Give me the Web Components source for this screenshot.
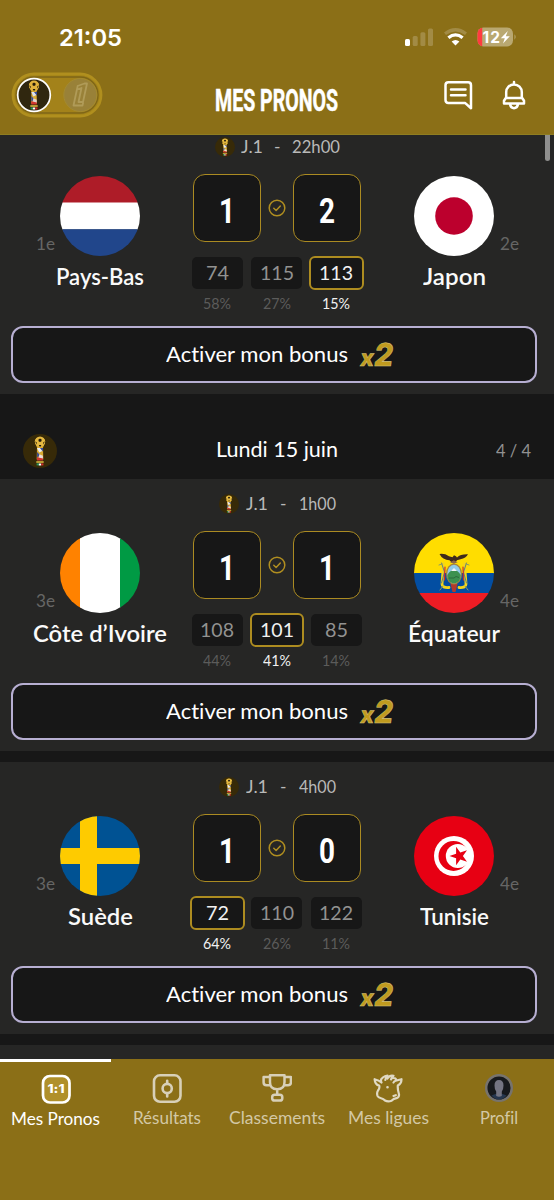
<!DOCTYPE html>
<html lang="fr">
<head>
<meta charset="utf-8">
<title>Mes Pronos</title>
<style>
html,body{margin:0;height:100%;background:#171717}
body{font-family:Lato,"Open Sans",sans-serif;color:#fff;overflow:hidden;font-variant-ligatures:none}
</style>
</head>
<body>
<pronos-app></pronos-app>
<script>
const define=(name,html,after)=>customElements.define(name,class extends HTMLElement{
  connectedCallback(){
    if(this.shadowRoot)return;
    this.attachShadow({mode:'open'}).innerHTML=typeof html==='function'?html(this):html;
    if(after)after(this);
  }
});
const a=(el,n,d='')=>el.getAttribute(n)??d;

define('pronos-app',`
<style>
:host{display:flex;flex-direction:column;width:554px;height:1200px;overflow:hidden;background:#171717}
main{flex:1;min-height:0;overflow:hidden;position:relative}
.list{display:flex;flex-direction:column;margin-top:-13px}
.gap{height:11px}
.thumb{position:absolute;right:4px;top:-8px;width:5px;height:34px;border-radius:3px;background:#8f8f8e}
</style>
<app-header></app-header>
<main>
 <div class="list">
  <match-card time="22h00" tw="48" cup="6" gapw="11.3" home="Pays-Bas" hw="88" hr="1e" hf="nl" away="Japon" aw="63" ar="2e" af="jp" score="1,2" odds="74,115,113" pct="58,27,15" sel="2"></match-card>
  <day-header></day-header>
  <match-card time="1h00" tw="37" cup="7" gapw="12.5" home="Côte d’Ivoire" hw="134" hr="3e" hf="ci" away="Équateur" aw="92" ar="4e" af="ec" score="1,1" odds="108,101,85" pct="44,41,14" sel="1"></match-card>
  <div class="gap"></div>
  <match-card time="4h00" tw="37" cup="7" gapw="12.5" home="Suède" hw="65" hr="3e" hf="se" away="Tunisie" aw="69" ar="4e" af="tn" score="1,0" odds="72,110,122" pct="64,26,11" sel="0"></match-card>
  <div class="gap"></div>
  <match-card time="" empty></match-card>
 </div>
 <div class="thumb"></div>
</main>
<tab-bar></tab-bar>`);

define('app-header',`
<style>
:host{display:block;height:135px;box-sizing:border-box;background:#8b6f17;border-bottom:1px solid #8f7d20}
.status{display:flex;align-items:center;height:74px;padding:0 37px 0 59px;box-sizing:border-box}
.clock{font:600 23.5px/30px Inter,sans-serif;padding-top:1px}
.clock fit-text{display:block}
.status svg{margin-left:auto;display:block}
.bar{display:grid;grid-template-columns:215px 123px 1fr;height:60px}
.pill{display:block;margin:-2px 0 0 11px}
.title{font:700 30.5px/34px Roboto,sans-serif;padding-top:10px;-webkit-text-stroke:.5px #fff}
.act{display:flex;justify-content:flex-end;gap:28px;padding-right:28px;padding-top:6px}
svg text{font-family:Inter,sans-serif;font-weight:700}
</style>
<div class="status"><div class="clock"><fit-text w="63">21:05</fit-text></div>
<svg width="114" height="22" viewBox="0 0 114 22">
 <rect x="2" y="13" width="5" height="7" rx="1.5" fill="#fff"/>
 <g fill="#a28b45"><rect x="9.7" y="10" width="5" height="10" rx="1.5"/><rect x="17.4" y="6.3" width="5" height="13.7" rx="1.5"/><rect x="25" y="2.5" width="5" height="17.5" rx="1.5"/></g>
 <g transform="translate(1 0)"><path d="M41 7.8Q51.5-.3 62 7.8" fill="none" stroke="#a28b45" stroke-width="3.2"/>
 <path d="M44.4 11.8Q51.5 6 58.6 11.8" fill="none" stroke="#fff" stroke-width="3.3"/>
 <path d="M47.6 15.6Q51.5 12.3 55.4 15.6L51.5 19.6Z" fill="#fff"/></g>
 <clipPath id="b"><rect x="74.5" y="1.5" width="35.5" height="19" rx="6"/></clipPath>
 <g clip-path="url(#b)"><rect x="74" y="1" width="37" height="20" fill="#b9a871"/><rect x="74" y="1" width="5.2" height="20" fill="#ff3b3f"/></g>
 <path d="M111.5 8.3q2.2 2.7 0 5.4z" fill="#b9a871"/>
 <text x="79.5" y="16.7" font-size="15.5" fill="#fff" textLength="17.5">12</text>
 <path d="M104.8 5 97.8 12.2h4l-1.8 5.3 6.8-7.2h-4z" fill="#fff"/>
</svg></div>
<div class="bar">
<svg class="pill" width="92" height="46" viewBox="0 0 92 46">
 <rect x="1.9" y="1.9" width="88.2" height="42.2" rx="21.1" fill="#a48419" stroke="#b08f1e" stroke-width="2.6"/>
 <rect x="5" y="5" width="82" height="36" rx="18" fill="#a3821a" stroke="#7f6618" stroke-width="1.4"/>
 <circle cx="69.3" cy="23" r="16.5" fill="#998138" stroke="#a38a31"/>
 <path d="M66.8 13.5 62.5 33.5H71.500L72.200 30.500M66.500 14 73.500 11.500H76L72 30H67.500L70.500 16 66 17.500" fill="none" stroke="#b09b58" stroke-width="1.8" stroke-linejoin="round"/>
 <circle cx="23" cy="23" r="16.3" fill="#30270f" stroke="#fff" stroke-width="1.7"/>
 <g transform="translate(6 6)">
  <path d="M14.4 13.5 12 9Q11 4 17 3q6 1 5 6l-2.4 4.5.3 12h-5.8z" fill="#d8aa32"/>
  <circle cx="17" cy="7.6" r="5" fill="#dfb13c"/><path d="M15.3 5.7 17 4.6l1.8 1.1-.7 2h-2.2zM12.2 7.2l1.6 1.4-.3 2zM21.8 7.2l-1.6 1.4.3 2zM15.8 11h2.5l-.5 1.4h-1.4z" fill="#21190b"/>
  <path d="M14.3 14h3l2 3-3 1.5z" fill="#dce2ed"/><path d="M17 14h3v3.5z" fill="#304aa2"/><path d="m14.2 18 3 3-2.8 3z" fill="#384c92"/><path d="m16.3 20.2 3.4 1.5v3.5h-4z" fill="#e2d4cf"/><path d="M14.3 23.3l5.5 1.2v2h-5.6z" fill="#d3362e"/>
  <path d="M13.3 27h7.4v2h-7.4z" fill="#b69a32"/><path d="M13.6 29.4h2.2v2h-2.2z" fill="#209458"/><path d="M15.8 29.4h2.4v2h-2.4z" fill="#fff"/><path d="M18.2 29.4h2.2v2h-2.2z" fill="#d62a29"/></g>
</svg>
<div class="title"><fit-text w="123">MES PRONOS</fit-text></div>
<div class="act">
<svg width="30" height="30" viewBox="0 0 30 30" fill="none" stroke="#fff" stroke-width="2.5" stroke-linejoin="round" stroke-linecap="round"><path d="M27 28.2V5.2Q27 2.3 24.1 2.3H4.4Q1.5 2.3 1.5 5.2V20Q1.5 22.9 4.4 22.9H21ZM7 9.4H21.5M7 15.3H21.5"/></svg>
<svg width="24" height="30" viewBox="0 0 24 30" fill="none" stroke="#fff" stroke-width="2.5" stroke-linejoin="round" stroke-linecap="round"><path d="M12 2V4M4.2 18V12.2a7.8 7.8 0 0 1 15.6 0V18M3.8 18H20.2L22 20.8V23.6H2V20.8ZM8 24.3Q8.8 28.2 12 28.2T16 24.3"/></svg>
</div></div>`);

define('cup-icon',el=>`
<style>:host{display:block}svg{display:block}</style>
<svg width="${a(el,'size')}" height="${a(el,'size')}" viewBox="0 0 34 34"><circle cx="17" cy="17" r="17" fill="#372a08"/>
<path d="M14 13.5 12 9Q11 4 17 3q6 1 5 6l-2 4.5.3 12h-6.6z" fill="#d8aa32"/>
<circle cx="17" cy="7.6" r="5.2" fill="#e5b941"/><path d="M15.3 5.7 17 4.6l1.8 1.1-.7 2h-2.2zM12.2 7.2l1.6 1.4-.3 2zM21.8 7.2l-1.6 1.4.3 2zM15.8 11h2.5l-.5 1.4h-1.4z" fill="#21190b"/>
<path d="M14 14h3.3l2 3-3 1.5z" fill="#e9edf5"/><path d="M17 14h3v3.5z" fill="#304aa2"/><path d="m14 18 3 3-2.8 3z" fill="#384c92"/><path d="m16.3 20.2 3.6 1.5v3.5h-4.4z" fill="#ecded8"/><path d="M14 23.3l6 1.2v2h-6z" fill="#d3362e"/>
<path d="M13.3 27h7.4v2h-7.4z" fill="#b69a32"/><path d="M13.6 29.4h2.2v2h-2.2z" fill="#209458"/><path d="M15.8 29.4h2.4v2h-2.4z" fill="#fff"/><path d="M18.2 29.4h2.2v2h-2.2z" fill="#d62a29"/></svg>`);

define('day-header',`
<style>
:host{display:grid;grid-template-columns:1fr auto 1fr;height:85px;box-sizing:border-box;padding:40px 23px 0;background:#171717}
.d{font-size:21px;line-height:30px}
.n{justify-self:end;font-size:17.5px;line-height:33px;color:#919191}
</style>
<cup-icon size="34"></cup-icon><div class="d"><fit-text w="122">Lundi 15 juin</fit-text></div><div class="n"><fit-text w="35">4 / 4</fit-text></div>`);

const flags={
nl:'<path fill="#ae1c28" d="M0 0h80v27H0z"/><path fill="#fff" d="M0 26.5h80v27H0z"/><path fill="#21468b" d="M0 53.3h80V80H0z"/>',
jp:'<path fill="#fff" d="M0 0h80v80H0z"/><circle cx="40" cy="40" r="18.8" fill="#bc002d"/>',
ci:'<path fill="#ff8200" d="M0 0h21v80H0z"/><path fill="#fff" d="M20 0h41v80H20z"/><path fill="#009a44" d="M60 0h20v80H60z"/>',
se:'<path fill="#005293" d="M0 0h80v80H0z"/><path fill="#fecb00" d="M20 0h17v80H20zM0 32h80v16H0z"/>',
tn:'<path fill="#e70013" d="M0 0h80v80H0z"/><circle cx="40" cy="40" r="20" fill="#fff"/><circle cx="39.5" cy="40" r="15" fill="#e70013"/><circle cx="43.8" cy="40" r="12" fill="#fff"/><path d="m35.5 40 6.6-2.2v-7l4.2 5.6 6.7-2.1-4.1 5.7 4.1 5.7-6.7-2.1-4.2 5.6v-7z" fill="#e70013"/>',
ec:`<path fill="#ffdd00" d="M0 0h80v41H0z"/><path fill="#034ea2" d="M0 40h80v21H0z"/><path fill="#ed1c24" d="M0 60h80v20H0z"/>
<g fill="none" stroke-linecap="round"><path d="M29.5 30.5 28 51q0 4 7 3.5" stroke="#f4d51b" stroke-width="2.8"/><path d="M50.5 30.5 52 51q0 4-7 3.5" stroke="#f4d51b" stroke-width="2.8"/><path d="M27.5 30l3 9-3 11M52.5 30l-3 9 3 11" stroke="#35679f" stroke-width=".8"/><path d="M31 34 30.5 47M49 34 49.5 47" stroke="#cf2c2d" stroke-width="1.2"/><path d="m25 32 3-1m27 1-3-1M29 53l-3 4m25-4 3 4" stroke="#8a9a68" stroke-width="1"/></g>
<path d="M36.5 51h7l-2 8h-3z" fill="#b33a2b"/><ellipse cx="40" cy="41" rx="8" ry="10.5" fill="#a5833c"/><ellipse cx="40" cy="41" rx="6.8" ry="9.2" fill="#91cbe8"/><path d="M33.3 42q3-5 6.7-5t6.7 5l-.4 3.5q-2 4.7-6.3 4.7t-6.3-4.7z" fill="#3c9150"/><path d="M37 38l3-3 3 3z" fill="#f3f6f8"/><path d="M35 45h5l2-1.5 3 1" stroke="#2a6b3c" fill="none"/>
<path d="M25.5 21q5-.8 9.500 2.200l3.500 1 1.500-2 2 1 1 1.200q3.500-3.500 11-3.200-2 4-7.500 5l-3.500 1-2 2.500h-3l-2.500-2.500q-7-.2-10-6.200z" fill="#3f2a1c"/><path d="M36 29.3l3.8-2 3.8 2-3.8 1.5z" fill="#8d6747"/>`};

define('round-flag',el=>`
<style>:host{display:block;width:80px;height:80px;border-radius:50%;overflow:hidden}svg{display:block}</style>
<svg width="80" height="80" viewBox="0 0 80 80">${flags[a(el,'code')]}</svg>`);

define('team-block',el=>{
 const home=el.hasAttribute('home');
 const rank=`<div class="r ${home?'l':'g'}"><fit-text w="19">${a(el,'rank')}</fit-text></div>`;
 return `
<style>
:host{display:block;padding:2px 7px 0 0}
:host([home]){padding:2px 0 0 7px}
.f{display:grid;grid-template-columns:1fr 80px 1fr;column-gap:5.5px;align-items:end}
.r{font-size:16.5px;line-height:20px;color:#666665;padding-bottom:2px}
.l{text-align:right}
.n{margin-top:6px;text-align:center;font-size:23px;line-height:28px;font-weight:600;color:#fafafa}
</style>
<div class="f">${home?rank:'<span></span>'}<round-flag code="${a(el,'flag')}"></round-flag>${home?'':rank}</div>
<div class="n"><fit-text w="${a(el,'w')}">${a(el,'name')}</fit-text></div>`});

define('score-panel',el=>{
 const s=a(el,'score').split(','),o=a(el,'odds').split(','),p=a(el,'pct').split(','),sel=+a(el,'sel');
 return `
<style>
:host{display:block}
.s{display:flex;justify-content:space-between;align-items:center}
.b{width:68px;height:68px;box-sizing:border-box;border:1.6px solid #ab8b22;border-radius:12px;background:#171717;display:grid;place-items:center;font:700 35px/40px Roboto,sans-serif;padding-top:8px}
.o{display:grid;grid-template-columns:repeat(3,59.6px);margin:14px -5.5px 0;justify-items:center}
.c{display:flex;flex-direction:column;align-items:center}
.v{height:34px;display:flex;align-items:center}
.k{box-sizing:border-box;width:51px;height:32px;border-radius:5px;background:#171717;text-align:center;font-size:19.5px;line-height:31px;color:#929291}
.p{margin-top:5px;font-size:14.5px;line-height:17px;color:#5c5c5b}
.on .k{width:54.5px;height:34px;border:2px solid #ad8c20;border-radius:6px;line-height:29px;color:#f1f1f1}
.on .p{color:#f1f1f1}
</style>
<div class="s"><div class="b"><fit-text w="16">${s[0]}</fit-text></div>
<svg width="18" height="18" viewBox="0 0 18 18" fill="none" stroke="#b08e20" stroke-width="1.5" stroke-linecap="round" stroke-linejoin="round"><circle cx="9" cy="9" r="7.8"/><path d="m5.8 9.3 2.3 2.2 4.2-4.5"/></svg>
<div class="b"><fit-text w="16">${s[1]}</fit-text></div></div>
<div class="o">${o.map((v,i)=>`<div class="c ${i===sel?'on':''}"><div class="v"><div class="k"><fit-text w="${v.length>2?34:23}">${v}</fit-text></div></div><div class="p"><fit-text w="28">${p[i]}%</fit-text></div></div>`).join('')}</div>`});

define('bonus-button',`
<style>
:host{display:block;margin:0 17px 0 11px}
button{all:unset;box-sizing:border-box;width:100%;height:57px;border:2px solid #b7afd2;border-radius:12px;background:#171717;display:flex;align-items:center;padding:0 0 0 153px;gap:9px;font-size:20.5px;line-height:24px}
svg{display:block}
svg text{font-family:Inter,sans-serif;font-weight:800;fill:#c09b1f;stroke:#d5c47d;stroke-width:.5}
</style>
<button><fit-text w="182">Activer mon bonus</fit-text>
<svg width="44" height="44" viewBox="0 0 44 44"><g transform="translate(5.5 1.3) skewX(-8)"><text x="1.5" y="32.5" font-size="23" textLength="13.5" lengthAdjust="spacingAndGlyphs">x</text><text x="15" y="32.5" font-size="31.5" textLength="19" lengthAdjust="spacingAndGlyphs">2</text></g></svg></button>`);

define('match-card',el=>el.hasAttribute('empty')?`<style>:host{display:block;height:272px;background:#262625}</style>`:`
<style>
:host{display:block;height:272px;box-sizing:border-box;background:#262625;padding-top:15px}
.m{display:flex;justify-content:center;align-items:center;height:20px;font-size:16.5px;line-height:20px;color:#b9b9b8;gap:${a(el,'gapw')}px;padding-left:1px}
.m cup-icon{margin-right:calc(${a(el,'cup')}px - ${a(el,'gapw')}px)}
.g{display:grid;grid-template-columns:193px 168px 193px;height:152px;margin-top:16.7px}
bonus-button{margin-top:.3px}
</style>
<div class="m"><cup-icon size="20"></cup-icon><fit-text w="22">J.1</fit-text><fit-text w="6.5">-</fit-text><fit-text w="${a(el,'tw')}">${a(el,'time')}</fit-text></div>
<div class="g"><team-block home name="${a(el,'home')}" w="${a(el,'hw')}" rank="${a(el,'hr')}" flag="${a(el,'hf')}"></team-block>
<score-panel score="${a(el,'score')}" odds="${a(el,'odds')}" pct="${a(el,'pct')}" sel="${a(el,'sel')}"></score-panel>
<team-block name="${a(el,'away')}" w="${a(el,'aw')}" rank="${a(el,'ar')}" flag="${a(el,'af')}"></team-block></div>
<bonus-button></bonus-button>`);

define('tab-item',`
<style>
:host{display:flex;flex-direction:column;align-items:center;box-sizing:border-box;padding:12px 0 0 1px;border-top:3px solid transparent;font-size:16.5px;line-height:20px;color:#d3c8a5}
:host([active]){border-top-color:#fff;color:#fff}
.l{margin-top:4px}
:host([active]) .l{margin-top:5px}
::slotted(svg){display:block}
</style>
<slot name="icon"></slot><div class="l"><slot></slot></div>`);

define('tab-bar',`
<style>
:host{display:grid;grid-template-columns:repeat(5,1fr);height:141px;background:#8b6f17}
svg text{font-family:Inter,sans-serif;font-weight:800}
</style>
<tab-item active><svg slot="icon" width="30" height="30" viewBox="0 0 30 30"><rect x="2" y="2" width="26.5" height="26.5" rx="7" fill="#b0902a" stroke="#fff" stroke-width="2.7"/><text x="6.5" y="19.3" font-size="12" fill="#fff" textLength="17" lengthAdjust="spacingAndGlyphs">1:1</text></svg><fit-text w="89">Mes Pronos</fit-text></tab-item>
<tab-item><svg slot="icon" width="30" height="30" viewBox="0 0 30 30" fill="none" stroke="#d8d0b8" stroke-width="2.6" stroke-linecap="round"><rect x="2" y="1.3" width="26.5" height="26.5" rx="6"/><circle cx="15.2" cy="14.5" r="4.6"/><path d="M15.2 6.7V9M15.2 19.7V22.5"/></svg><fit-text w="68">Résultats</fit-text></tab-item>
<tab-item><svg slot="icon" width="30" height="30" viewBox="0 0 30 30" fill="none" stroke="#d8d0b8" stroke-width="2.5" stroke-linejoin="round"><path d="M8 1.3H22.5V8Q22.5 15.2 15.2 15.2T8 8ZM8 3H1.6V8.5Q1.6 11.2 4.5 11.2H8.5M22.5 3H28.9V8.5Q28.9 11.2 26 11.2H22M15.2 15.5V20.5M12.8 20.8H17.8Q20.3 20.8 20.3 23.2V24.2Q20.3 26.6 17.8 26.6H12.6Q10.2 26.6 10.2 24.2V23.2Q10.2 20.8 12.8 20.8Z"/></svg><fit-text w="96">Classements</fit-text></tab-item>
<tab-item><svg slot="icon" width="30" height="30" viewBox="0 0 30 30" fill="none" stroke="#e0d9c3" stroke-width="2.2" stroke-linejoin="round" stroke-linecap="round"><path d="M8.5 8.5Q6 6.3 1.6 5.2 2 11 6.2 11.500 7 14 5 16.500 3.500 19 4.500 21.800 5.200 23.500 8 24.200 10.500 24.800 12 26.500 15 28.200 18.500 26.800 20.500 24.800 23.500 24.200 26.800 23 25.800 19.500 24.500 15.500 24.800 11.500 28.5 9.5 28.5 5.2L23.5 6.5M8.5 8.5Q7 5.5 9.5 3.800 12 1.500 14.5 1.500 12.500 3.500 12.3 6M14.500 4.500Q17 .8 20.500 1.800 18.500 3.200 18 5.500M19 4.300Q22.500 3.200 23.500 6.500 21 6.800 20.500 8.500M20.500 22l2.300-.8"/><circle cx="14.5" cy="13.3" r=".6" fill="#e0d9c3" stroke-width="1.4"/></svg><fit-text w="81">Mes ligues</fit-text></tab-item>
<tab-item><svg slot="icon" width="30" height="30" viewBox="0 0 30 30"><circle cx="15" cy="14" r="12.8" fill="#17191d" stroke="#77736d" stroke-width="2.5"/><path d="M7.5 21.5Q15 17.5 22.5 21.5 19.5 25.5 15 25.5T7.5 21.5Z" fill="#26364e"/><path d="M10.5 11.5Q10.5 6 15 6T19.5 11.5Q19.5 15.5 17.8 17.5V22Q15 23.5 12.2 22V17.5Q10.5 15.5 10.5 11.5Z" fill="#747482"/></svg><fit-text w="38">Profil</fit-text></tab-item>`);

/* Fixed-width label: the text is stretched horizontally to fill its box. */
define('fit-text',el=>`
<style>:host{display:inline-block;width:${a(el,'w')}px;text-align:left;white-space:nowrap}span{display:inline-block;transform-origin:0 50%}</style><span><slot></slot></span>`,
el=>{
 const s=el.shadowRoot.querySelector('span'),n=s.getBoundingClientRect().width;
 if(n)s.style.transform=`scaleX(${+a(el,'w')/n})`;
});
</script>
</body>
</html>
